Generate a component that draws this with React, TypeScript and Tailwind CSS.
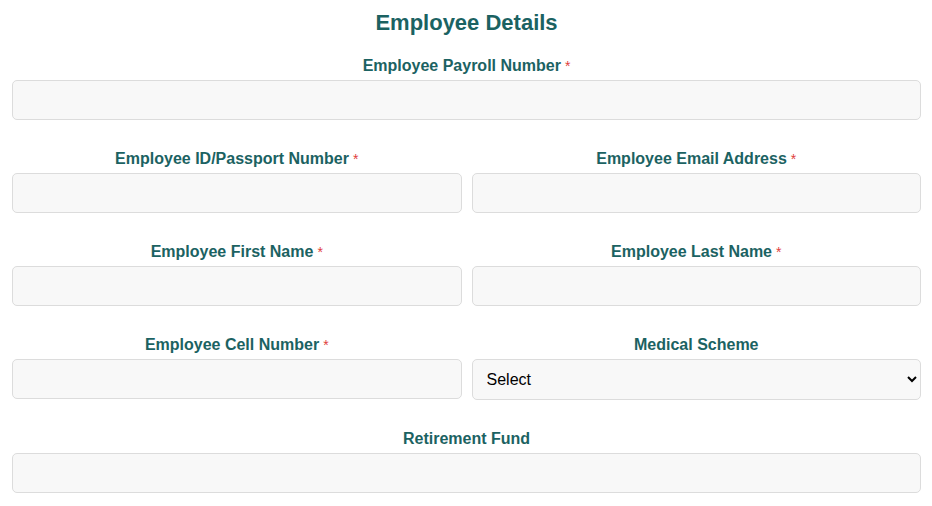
import { useState } from 'react';

const inputCls =
  'block w-full h-[40px] rounded-[5px] border border-[#dcdcdc] bg-[#f8f8f8] px-[14px] text-[16px] text-black focus:outline-none';

function Label({ text, required }: { text: string; required?: boolean }) {
  return (
    <label className="block text-center text-[16px] leading-[22px] font-bold text-[#1b6262] mb-[3px]">
      {text}
      {required && <span className="text-[#e0403c] font-normal text-[14px] align-top ml-[4px]">*</span>}
    </label>
  );
}

function Field({ label, required }: { label: string; required?: boolean }) {
  const [value, setValue] = useState('');
  return (
    <div>
      <Label text={label} required={required} />
      <input className={inputCls} value={value} onChange={(e) => setValue(e.target.value)} />
    </div>
  );
}

export default function App() {
  return (
    <div className="min-h-screen bg-white pl-[12px] pr-[11px] pt-[10px] font-['Liberation_Sans',Arial,sans-serif]">
      <h2 className="text-center text-[22px] leading-[26px] font-bold text-[#1b6262] mb-[19px]">
        Employee Details
      </h2>

      <div className="flex flex-col gap-[28px]">
        <Field label="Employee Payroll Number" required />

        <div className="grid grid-cols-2 gap-x-[10px] gap-y-[28px]">
          <Field label="Employee ID/Passport Number" required />
          <Field label="Employee Email Address" required />
          <Field label="Employee First Name" required />
          <Field label="Employee Last Name" required />
          <Field label="Employee Cell Number" required />
          <div>
            <Label text="Medical Scheme" />
            <select className="block w-full h-[41px] rounded-[5px] border border-[#dcdcdc] bg-[#f8f8f8] pl-[10px] pr-[4px] text-[16px] text-black focus:outline-none">
              <option>Select</option>
            </select>
          </div>
        </div>

        <Field label="Retirement Fund" />
      </div>
    </div>
  );
}
